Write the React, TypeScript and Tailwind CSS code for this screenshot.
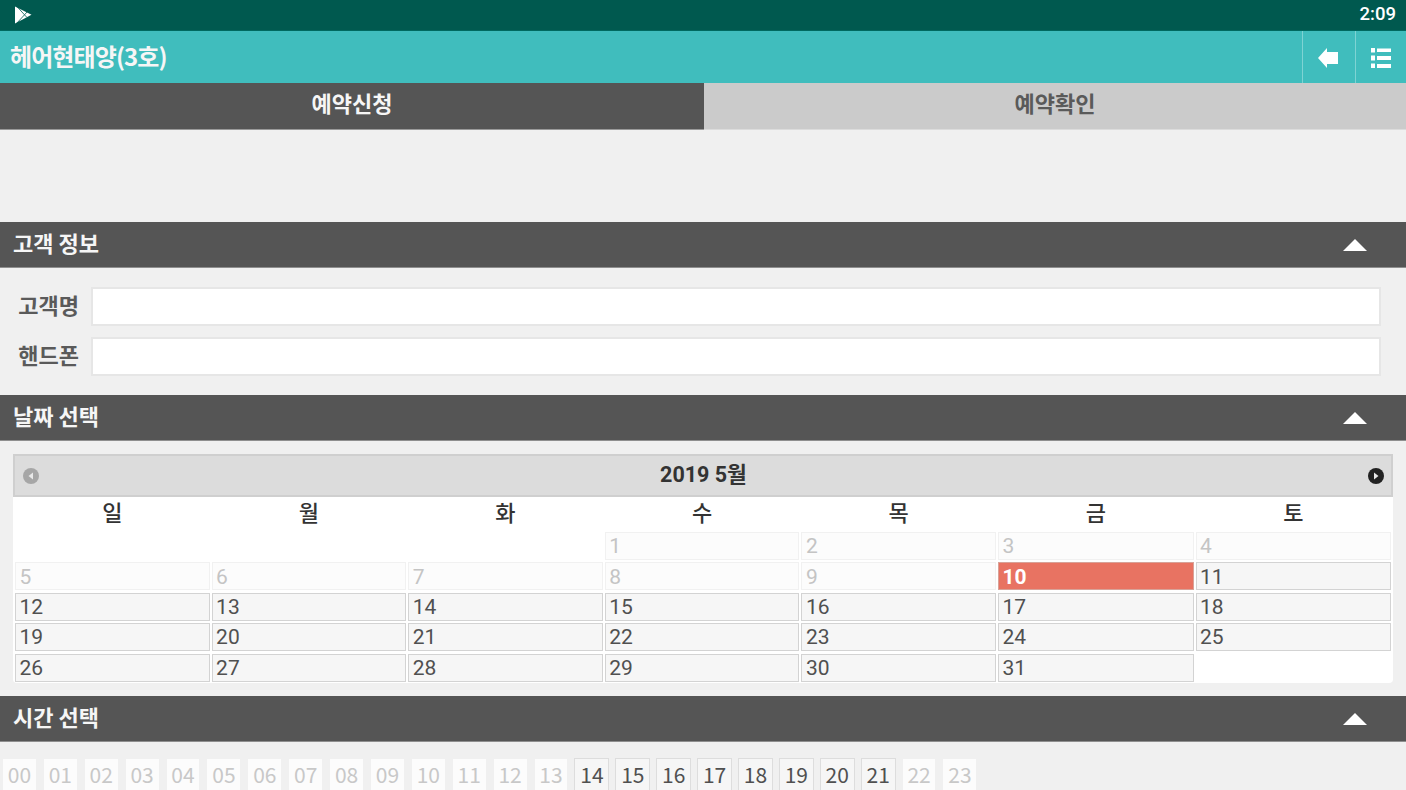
const kr = "font-['Noto_Sans_CJK_KR','Noto_Sans',sans-serif]";
const weekDays = ['일', '월', '화', '수', '목', '금', '토'];
const hours = Array.from({ length: 24 }, (_, i) => String(i).padStart(2, '0'));
const calCols = 'grid grid-cols-[repeat(5,194.600px)_195.600px_1fr] gap-x-[2px] px-[2px]';

function PlayLogo() {
  return (
    <svg width="17" height="18" viewBox="0 0 17 18" className="ml-[15px]">
      <path d="M0 0.500 L16.500 8.800 L0 17.500 Z" fill="#fff" />
      <path d="M1.500 0 L9.500 8.800 L1.500 17.500 M12 6 L9.500 8.800 L12 11.500" fill="none" stroke="#00594f" strokeWidth="0.8" />
    </svg>
  );
}

function SectionBar({ title }: { title: string }) {
  return (
    <div className="flex h-[46px] items-center justify-between border-b border-[#8f8f8f] bg-[#555555] pl-[13px] pr-[39px]">
      <span className={`${kr} pb-[4px] text-[22px] font-bold text-[#f6f6f6]`}>{title}</span>
      <span className="mt-px h-0 w-0 border-x-[12px] border-b-[12px] border-x-transparent border-b-white" />
    </div>
  );
}

function DayCell({ day, state }: { day: number; state: 'off' | 'on' | 'picked' }) {
  const style = {
    off: 'border-[#f1f1f1] bg-[#fcfcfc] text-[#c4c4c4]',
    on: 'border-[#d3d3d3] bg-[#f6f6f6] text-[#505050]',
    picked: 'border-[#d8a298] bg-[#e87362] font-bold text-white',
  }[state];
  return (
    <div className={`flex h-[28px] items-center border pl-[3.500px] pt-[2px] font-['Roboto',sans-serif] text-[21px] ${style}`}>
      {day}
    </div>
  );
}

function FormRow({ label }: { label: string }) {
  return (
    <div className="flex items-center">
      <span className={`${kr} w-[91px] pb-[4px] pr-[12px] text-right text-[22px] font-bold text-[#5a5a5a]`}>{label}</span>
      <div className="h-[39px] flex-1 border-2 border-[#e6e6e6] bg-white" />
    </div>
  );
}

export default function App() {
  const days: (number | null)[] = [null, null, null];
  for (let d = 1; d <= 31; d++) days.push(d);

  return (
    <div className="h-[790px] overflow-hidden bg-[#f0f0f0]">
      <div className="flex h-[31px] items-center justify-between border-b border-[#00695f] bg-[#00594f]">
        <PlayLogo />
        <span className="pr-[10px] font-['Roboto',sans-serif] text-[18.500px] font-medium text-white">2:09</span>
      </div>

      <div className="flex h-[52px] items-stretch justify-between bg-[#40bdbd]">
        <h1 className={`${kr} self-center pb-[3px] pl-[10px] text-[24px] font-bold tracking-[-0.900px] text-[#f6f6f6]`}>헤어현태양(3호)</h1>
        <div className="flex">
          <div className="flex w-[53px] items-center justify-center border-l border-[#7fd3d3]">
            <svg width="20" height="20" viewBox="0 0 20 20" className="mr-[2px] mt-[1px]">
              <path d="M0 10 L9 0 L9 4 L20 4 L20 16 L9 16 L9 20 Z" fill="#fff" />
            </svg>
          </div>
          <div className="flex w-[51px] items-center justify-center border-l border-[#7fd3d3]">
            <svg width="20" height="20" viewBox="0 0 20 20" className="mt-[1px]">
              <path d="M0 0h4v4.500H0zM6 0.500h14v3.500H6zM0 7.500h4v5H0zM6 8h14v4H6zM0 15.500h4v4.500H0zM6 16h14v4H6z" fill="#fff" />
            </svg>
          </div>
        </div>
      </div>

      <div className={`${kr} flex h-[47px] text-[22px] font-bold`}>
        <div className="flex w-[704px] items-center justify-center border-b border-[#9a9a9a] bg-[#555555] pb-[7px] text-[#f6f6f6]">예약신청</div>
        <div className="flex flex-1 items-center justify-center border-b border-[#dcdcdc] bg-[#cbcbcb] pb-[7px] text-[#5a5a5a]">예약확인</div>
      </div>

      <div className="h-[92px]" />

      <SectionBar title="고객 정보" />
      <div className="flex h-[127px] flex-col gap-[11px] pr-[25px] pt-[19px]">
        <FormRow label="고객명" />
        <FormRow label="핸드폰" />
      </div>

      <SectionBar title="날짜 선택" />
      <div className="mx-[13px] mt-[13px] h-[229px] rounded-b-[4px] bg-white">
        <div className="flex h-[43px] items-center justify-between border-2 border-[#cfcfcf] bg-[#dcdcdc] pl-[7px] pr-[6px]">
          <svg width="18" height="18" viewBox="0 0 18 18" className="mt-[1px]">
            <circle cx="9" cy="9" r="8" fill="#a6a6a6" />
            <path d="M11 5.500 L6.500 9 L11 12.500 Z" fill="#e8e8e8" />
          </svg>
          <span className="font-['Roboto','Noto_Sans_CJK_KR',sans-serif] text-[21.500px] font-bold text-[#333333]">2019 5월</span>
          <svg width="18" height="18" viewBox="0 0 18 18" className="mt-[1px]">
            <circle cx="9" cy="9" r="8" fill="#222222" />
            <path d="M7 5.500 L11.500 9 L7 12.500 Z" fill="#e8e8e8" />
          </svg>
        </div>
        <div className={calCols}>
          {weekDays.map((w) => (
            <div key={w} className={`${kr} flex h-[35px] items-center justify-center pb-[6px] text-[22px] font-medium text-[#333333]`}>{w}</div>
          ))}
        </div>
        <div className={`${calCols} gap-y-[2.400px]`}>
          {days.map((d, i) => {
            if (d === null) return <div key={i} className="h-[28px]" />;
            const state = d < 10 ? 'off' : d === 10 ? 'picked' : 'on';
            return <DayCell key={i} day={d} state={state} />;
          })}
        </div>
      </div>

      <div className="h-[13px]" />
      <SectionBar title="시간 선택" />
      <div className="mt-[16px] flex gap-[6px] pl-[2px]">
        {hours.map((h, i) => {
          const on = i >= 14 && i <= 21;
          return (
            <div
              key={h}
              className={`flex h-[34px] w-[34.900px] items-center justify-center border bg-clip-padding pb-[1px] ${kr} text-[21px] ${
                on ? 'border-[#dddddd] bg-[#f6f6f6] text-[#505050]' : 'border-transparent bg-[#fcfcfc] text-[#c8c8c8]'
              }`}
            >
              {h}
            </div>
          );
        })}
      </div>
    </div>
  );
}
